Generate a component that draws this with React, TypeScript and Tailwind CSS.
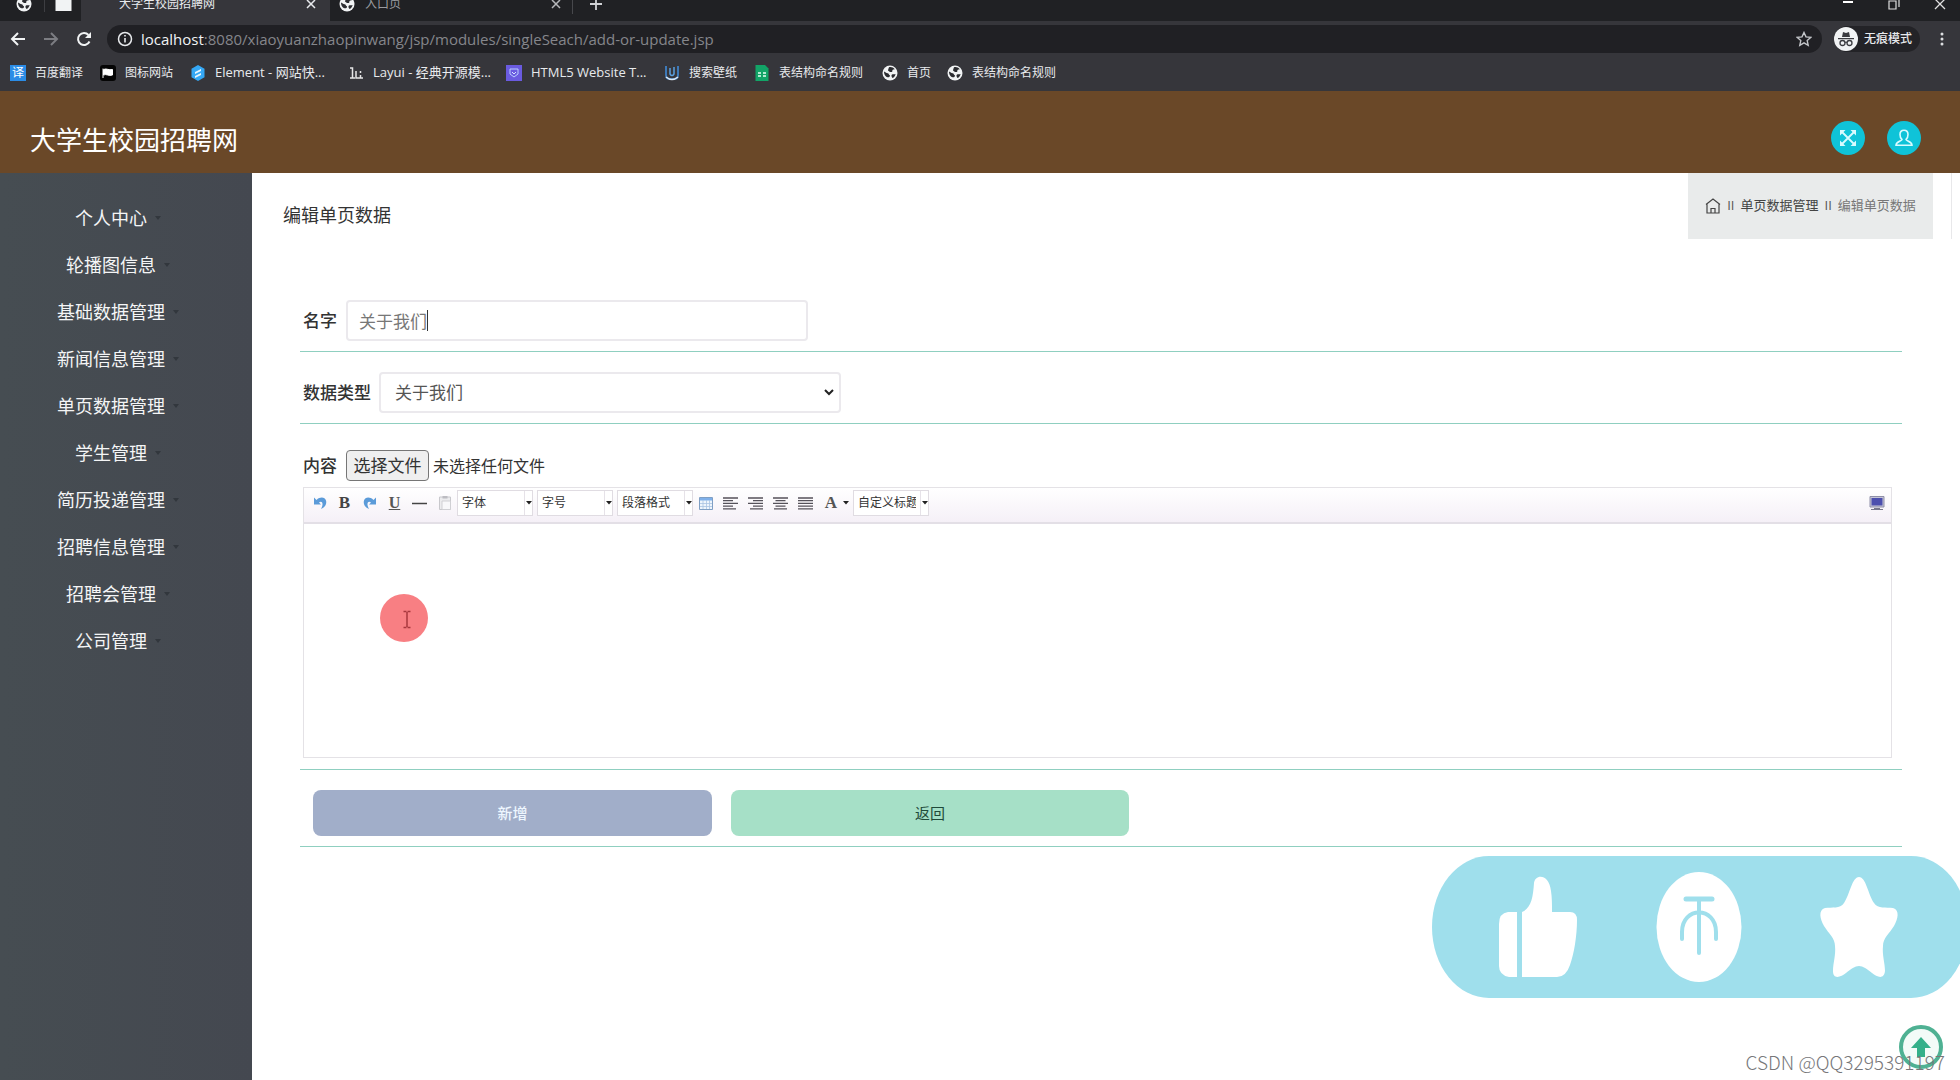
import React from "react";

type IconProps = { className?: string };

const Globe = ({ className = "size-4" }: IconProps) => (
  <svg viewBox="0 0 16 16" className={className} aria-hidden="true">
    <circle cx="8" cy="8" r="7.5" fill="#f1f3f4" />
    <path
      d="M2 6.5c1.5.3 2 1.6 3.600 1.700 1.400.1 1 1.500 2 1.900.8.4.2 1.800-.6 2.200-2.500.4-5-2-5-5.800zM7 2.200c1.800-.6 4.500.1 5.700 2.100-.8.300-1.500 0-2.100.6-.8.9.300 1.700-.9 2.100-1.500.400-2.300-.700-3.400-1.300-.8-.500.300-1.300.2-2.100zM10 9.500c1-.6 2.500-.2 3.600-.6-.3 1.800-1.600 3.500-3 4.100-.9-.9-1.700-2.600-.6-3.500z"
      fill="#2b2c30"
    />
  </svg>
);

const BookmarkIcon = ({ kind }: { kind: string }) => {
  switch (kind) {
    case "translate":
      return (
        <span className="flex size-4 items-center justify-center bg-[#2b8ce6] text-xs leading-none text-white">译</span>
      );
    case "flag":
      return (
        <svg viewBox="0 0 16 16" className="size-4" aria-hidden="true">
          <rect width="16" height="16" rx="3" fill="#050505" />
          <path d="M3 3.500v9.500M3.500 4.500c3-1.500 5 1 9 0v5.500c-4 1.500-6-1.500-9 0z" fill="#fff" stroke="#fff" />
        </svg>
      );
    case "element":
      return (
        <svg viewBox="0 0 16 16" className="size-4" aria-hidden="true">
          <path d="M8 0l6.500 3.800v8.400L8 16l-6.500-3.800V3.800z" fill="#35a8f5" />
          <path d="M5 7l6-3v2L5 9zM5 11l6-3v2l-6 3z" fill="#e8f6ff" />
        </svg>
      );
    case "layui":
      return (
        <svg viewBox="0 0 16 16" className="size-4" aria-hidden="true">
          <path d="M2 3h2.500v9.500M2 13h5M8 6v7h2M12.500 6v2M12.500 10v3M10 13h5" fill="none" stroke="#e6e6e6" strokeWidth="1.500" />
        </svg>
      );
    case "html5":
      return (
        <svg viewBox="0 0 16 16" className="size-4" aria-hidden="true">
          <rect width="16" height="16" fill="#6a5be0" />
          <path d="M4 4h8v5l-4 3-4-3z" fill="none" stroke="#b9d0ff" />
          <path d="M6 7l2 2 2-2" fill="none" stroke="#d8e4ff" />
        </svg>
      );
    case "wallpaper":
      return (
        <svg viewBox="0 0 16 16" className="size-4" aria-hidden="true">
          <path d="M2 1v9q0 4 4 4h4q4 0 4-4V1" fill="none" stroke="#3d79b8" strokeWidth="2" />
          <path d="M6 3v6q2 3 4 0V2" fill="none" stroke="#5aa0e0" strokeWidth="1.500" />
          <path d="M2 12q6 5 12 0" fill="none" stroke="#dfeaf5" strokeWidth="1.500" />
        </svg>
      );
    case "sheet":
      return (
        <svg viewBox="0 0 16 16" className="size-4" aria-hidden="true">
          <path d="M1.500 0H11l3.500 3.500V16h-13z" fill="#12a467" />
          <path d="M4 8h3M9 8h3M4 11h3M9 11h3" stroke="#e8fff5" strokeWidth="1.500" />
        </svg>
      );
    default:
      return <Globe />;
  }
};

const bookmarks = [
  { kind: "translate", label: "百度翻译", style: "w-[90px] text-xs" },
  { kind: "flag", label: "图标网站", style: "w-[90px] text-xs" },
  { kind: "element", label: "Element - 网站快...", style: "w-[158px] text-[13px]" },
  { kind: "layui", label: "Layui - 经典开源模...", style: "w-[158px] text-[13px]" },
  { kind: "html5", label: "HTML5 Website T...", style: "w-[158px] text-[13px]" },
  { kind: "wallpaper", label: "搜索壁纸", style: "w-[90px] text-xs" },
  { kind: "sheet", label: "表结构命名规则", style: "w-[128px] text-xs" },
  { kind: "globe", label: "首页", style: "w-[65px] text-xs" },
  { kind: "globe", label: "表结构命名规则", style: "w-[120px] text-xs" },
];

const Browser = () => (
  <div className="bg-[#36363b] text-[#e8eaed]">
    <div className="flex h-[21px] items-end overflow-hidden bg-[#202124] text-xs">
      <div className="flex h-[34px] w-[81px] shrink-0 items-center pl-4">
        <Globe />
        <span className="ml-3 h-4 w-px bg-[#3d3e42]" />
        <svg viewBox="0 0 16 14" className="ml-2.5 h-3.5 w-[17px]" aria-hidden="true">
          <path d="M0 1h7l1 2h8v11H0z" fill="#f1f3f4" />
        </svg>
      </div>
      <div className="flex h-[34px] w-[249px] shrink-0 items-center bg-[#36363b] pr-[11px] pl-[38px]">
        <span className="flex-1 whitespace-nowrap">大学生校园招聘网</span>
        <button aria-label="关闭标签页" className="size-4">
          <svg viewBox="0 0 16 16" className="size-4">
            <path d="M4 4l8 8M12 4l-8 8" stroke="#e8eaed" strokeWidth="1.500" />
          </svg>
        </button>
      </div>
      <div className="flex h-[34px] w-[242px] shrink-0 items-center pr-2 pl-[9px] text-[#9a9ca0]">
        <Globe />
        <span className="ml-2.5 flex-1">入口页</span>
        <button aria-label="关闭标签页" className="size-4">
          <svg viewBox="0 0 16 16" className="size-4">
            <path d="M4 4l8 8M12 4l-8 8" stroke="#b5b7ba" strokeWidth="1.500" />
          </svg>
        </button>
      </div>
      <div className="flex h-[34px] flex-1 items-center">
        <span className="h-5 w-px bg-[#47484c]" />
        <button aria-label="新标签页" className="ml-4">
          <svg viewBox="0 0 14 14" className="size-3.5">
            <path d="M7 1v12M1 7h12" stroke="#d0d2d5" strokeWidth="1.800" />
          </svg>
        </button>
      </div>
      <div className="flex h-[34px] items-center gap-[34px] pr-3.5">
        <button aria-label="最小化">
          <svg viewBox="0 0 12 12" className="size-3">
            <path d="M1 4h10" stroke="#fff" strokeWidth="2" />
          </svg>
        </button>
        <button aria-label="还原">
          <svg viewBox="0 0 12 12" className="size-3">
            <path d="M1 3h7v8H1zM3 1h8v8" fill="none" stroke="#e0e0e0" strokeWidth="1.200" />
          </svg>
        </button>
        <button aria-label="关闭">
          <svg viewBox="0 0 12 12" className="size-3">
            <path d="M1 1l10 10M11 1L1 11" stroke="#e0e0e0" strokeWidth="1.300" />
          </svg>
        </button>
      </div>
    </div>

    <div className="flex h-9 items-center pr-2.5">
      <div className="flex w-[107px] shrink-0 items-center gap-[17px] pl-2.5">
        <button aria-label="后退">
          <svg viewBox="0 0 16 16" className="size-4">
            <path d="M15 8H2M8 2L2 8l6 6" fill="none" stroke="#f1f3f4" strokeWidth="2" />
          </svg>
        </button>
        <button aria-label="前进">
          <svg viewBox="0 0 16 16" className="size-4">
            <path d="M1 8h13M8 2l6 6-6 6" fill="none" stroke="#7c7d82" strokeWidth="2" />
          </svg>
        </button>
        <button aria-label="重新加载">
          <svg viewBox="0 0 16 16" className="size-4">
            <path d="M13.500 10.500A6 6 0 1 1 12.500 4" fill="none" stroke="#f1f3f4" strokeWidth="2" />
            <path d="M15 1v6H9z" fill="#f1f3f4" />
          </svg>
        </button>
      </div>
      <div className="flex h-7 flex-1 items-center rounded-full bg-[#202024] pr-2.5 pl-2.5">
        <svg viewBox="0 0 16 16" className="size-4" aria-hidden="true">
          <circle cx="8" cy="8" r="6.500" fill="none" stroke="#e8eaed" strokeWidth="1.500" />
          <path d="M8 7v4.500M8 4v1.600" stroke="#e8eaed" strokeWidth="1.600" />
        </svg>
        <p className="ml-2 flex-1 text-[15px] leading-5 text-[#85868b]">
          <span className="text-[#f1f3f4]">localhost</span>
          :8080/xiaoyuanzhaopinwang/jsp/modules/singleSeach/add-or-update.jsp
        </p>
        <button aria-label="添加书签">
          <svg viewBox="0 0 16 16" className="size-4">
            <path d="M8 1.500l2 4.400 4.700.5-3.500 3.200 1 4.700L8 11.900l-4.200 2.400 1-4.700L1.300 6.400 6 5.900z" fill="none" stroke="#c4c6ca" strokeWidth="1.400" />
          </svg>
        </button>
      </div>
      <div className="ml-3 flex h-[26px] items-center rounded-full bg-[#232327] pr-2">
        <svg viewBox="0 0 24 24" className="size-6" aria-hidden="true">
          <circle cx="12" cy="12" r="12" fill="#f1f3f4" />
          <path d="M8 10l1-5 3 1 3-1 1 5zM4 11h16v1.300H4z" fill="#3a3b40" />
          <circle cx="8.500" cy="16" r="2.500" fill="none" stroke="#3a3b40" strokeWidth="1.300" />
          <circle cx="15.500" cy="16" r="2.500" fill="none" stroke="#3a3b40" strokeWidth="1.300" />
          <path d="M11 15.500q1-.8 2 0" fill="none" stroke="#3a3b40" />
        </svg>
        <span className="ml-1.5 text-xs font-medium">无痕模式</span>
      </div>
      <button aria-label="菜单" className="ml-3.5">
        <svg viewBox="0 0 16 16" className="size-4">
          <circle cx="8" cy="3" r="1.500" fill="#dcdee1" />
          <circle cx="8" cy="8" r="1.500" fill="#dcdee1" />
          <circle cx="8" cy="13" r="1.500" fill="#dcdee1" />
        </svg>
      </button>
    </div>

    <nav className="flex h-[34px] items-center pb-0.5 pl-2.5">
      {bookmarks.map((b, i) => (
        <a key={i} href="#" className={`flex shrink-0 items-center gap-[9px] whitespace-nowrap ${b.style}`}>
          <BookmarkIcon kind={b.kind} />
          {b.label}
        </a>
      ))}
    </nav>
  </div>
);

const menu = [
  "个人中心",
  "轮播图信息",
  "基础数据管理",
  "新闻信息管理",
  "单页数据管理",
  "学生管理",
  "简历投递管理",
  "招聘信息管理",
  "招聘会管理",
  "公司管理",
];

const Caret = () => (
  <svg viewBox="0 0 6 4" className="h-1 w-1.5 shrink-0" aria-hidden="true">
    <path d="M0 0h6L3 3.500z" fill="#222" />
  </svg>
);

const Combo = ({ label }: { label: string }) => (
  <span className="relative mr-1 flex h-[26px] w-[76px] border border-[#e0dce2] bg-white last-of-type:mr-0">
    <select aria-label={label} className="w-full appearance-none bg-transparent pr-3 pl-1 text-xs text-[#333] outline-none">
      <option>{label}</option>
    </select>
    <span className="pointer-events-none absolute inset-y-0 right-0 flex w-2 items-center justify-center border-l border-[#e6e2e8]">
      <Caret />
    </span>
  </span>
);

const Tool = ({ label, children }: { label: string; children: React.ReactNode }) => (
  <button aria-label={label} className="flex h-5 w-[25px] items-center justify-center">
    {children}
  </button>
);

const Lines = ({ d }: { d: string }) => (
  <svg viewBox="0 0 15 13" className="h-[13px] w-[15px]">
    <path d={d} stroke="#55525a" strokeWidth="1.300" />
  </svg>
);

const UndoArrow = ({ flip = false }: { flip?: boolean }) => (
  <svg viewBox="0 0 14 14" className={flip ? "size-3.5 -scale-x-100" : "size-3.5"}>
    <path d="M1 1.500v7h7L6 6.500C8 5 9.800 6 9.500 9c-.2 1.500-.8 2.700-1.500 4 4-1.500 6-5 5-8.500C12 1 7 .5 3.500 4z" fill="#5b9bd9" />
  </svg>
);

const Editor = () => (
  <div className="mt-1.5 mr-[10px] mb-[11px] ml-[3px] flex h-[271px] flex-col border border-[#e4e2e6] bg-white">
    <div className="flex h-9 shrink-0 items-center border-b-2 border-[#e3dfe6] bg-gradient-to-b from-white to-[#f5f0f7] pr-1.5 pb-1 pl-[3px]">
      <Tool label="撤销"><UndoArrow /></Tool>
      <Tool label="加粗"><span className="font-['Liberation_Serif'] text-[17px] leading-5 font-bold text-[#444]">B</span></Tool>
      <Tool label="重做"><UndoArrow flip /></Tool>
      <Tool label="下划线"><span className="font-['Liberation_Serif'] text-base leading-5 font-bold text-[#555] underline">U</span></Tool>
      <Tool label="分隔线">
        <svg viewBox="0 0 15 3" className="h-[3px] w-[15px]"><path d="M0 1.500h15" stroke="#444" strokeWidth="1.500" /></svg>
      </Tool>
      <Tool label="粘贴">
        <svg viewBox="0 0 14 16" className="h-4 w-3.5">
          <path d="M1.500 2h11v12.500h-11z" fill="#ececee" stroke="#c8c8cc" />
          <path d="M4.500 1h5v2.500h-5z" fill="#bdbdc2" />
          <path d="M4 6h8.500v8.500H4z" fill="#f8f8fa" stroke="#d0d0d4" />
        </svg>
      </Tool>
      <Combo label="字体" />
      <Combo label="字号" />
      <Combo label="段落格式" />
      <div className="-ml-1 flex items-center">
        <Tool label="表格">
          <svg viewBox="0 0 14 13" className="h-[13px] w-3.5">
            <path d="M.5.5h13v12H.5z" fill="#eef5fc" stroke="#7f9fc4" />
            <path d="M1 1h12v2.500H1z" fill="#7fb0ea" />
            <path d="M1 6.500h12M1 9.500h12M4 3v9M7.500 3v9M10.500 3v9" stroke="#a9c4e2" strokeWidth=".8" />
          </svg>
        </Tool>
        <Tool label="左对齐"><Lines d="M0 1h15M0 3.700h10M0 6.400h15M0 9.100h10M0 11.800h13" /></Tool>
        <Tool label="右对齐"><Lines d="M0 1h15M5 3.700h10M0 6.400h15M5 9.100h10M2 11.800h13" /></Tool>
        <Tool label="居中"><Lines d="M0 1h15M2.500 3.700h10M0 6.400h15M2.500 9.100h10M1 11.800h13" /></Tool>
        <Tool label="两端对齐"><Lines d="M0 1h15M0 3.700h15M0 6.400h15M0 9.100h15M0 11.800h15" /></Tool>
        <button aria-label="字体颜色" className="flex h-5 w-[35px] items-center justify-end gap-1.5 pr-1">
          <span className="font-['Liberation_Serif'] text-[17px] leading-5 font-bold text-[#555]">A</span>
          <Caret />
        </button>
      </div>
      <Combo label="自定义标题" />
      <button aria-label="全屏" className="ml-auto">
        <svg viewBox="0 0 16 14" className="h-3.5 w-4">
          <path d="M1 .5h14v10.500H1z" fill="#c5c5d6" stroke="#8f8fa8" />
          <path d="M2.500 2h11v7.500h-11z" fill="#4c4fae" />
          <path d="M5 12.500h6M2 13.500h12" stroke="#77778c" />
        </svg>
      </button>
    </div>
    <textarea aria-label="内容编辑" className="min-h-0 w-full flex-1 resize-none p-2 outline-none" />
  </div>
);

export default function App() {
  return (
    <div className="relative flex min-h-screen flex-col overflow-hidden bg-white font-['Open_Sans','Noto_Sans_CJK_SC',sans-serif] text-[#333]">
      <Browser />

      <header className="flex h-[82px] shrink-0 items-center justify-between bg-[#6a4828] pr-[39px] pl-[30px]">
        <h1 className="pt-4 text-[26px] leading-8 text-white">大学生校园招聘网</h1>
        <div className="flex gap-[22px] pt-3">
          <button aria-label="全屏" className="flex size-[34px] items-center justify-center rounded-full bg-[#0fc3d8]">
            <svg viewBox="0 0 16 16" className="size-4">
              <path d="M2 2l12 12M14 2L2 14" stroke="#d9fbff" strokeWidth="1.800" />
              <path d="M0 0h5.500L0 5.500zM16 0v5.500L10.500 0zM0 16v-5.500L5.500 16zM16 16h-5.500l5.500-5.500z" fill="#d9fbff" />
            </svg>
          </button>
          <button aria-label="用户" className="flex size-[34px] items-center justify-center rounded-full bg-[#0fc3d8]">
            <svg viewBox="0 0 18 18" className="size-[18px]" fill="none" stroke="#d9fbff" strokeWidth="1.600">
              <path d="M7 10.500C5.500 9.500 5 7.500 5 5.500 5 3 6.500 1.200 9 1.200s4 1.800 4 4.300c0 2-.5 4-2 5 0 1.500 6 2 6 5.800H1c0-3.800 6-4.300 6-5.800z" />
            </svg>
          </button>
        </div>
      </header>

      <div className="flex flex-1">
        <aside className="w-[252px] shrink-0 bg-gradient-to-r from-[#464d52] to-[#444850] pt-[21px]">
          <ul>
            {menu.map((m) => (
              <li key={m}>
                <a href="#" className="flex h-[47px] items-center justify-center gap-2 pr-4 text-lg text-[#f4f5f6]">
                  {m}
                  <svg viewBox="0 0 6 4" className="h-1 w-1.5" aria-hidden="true">
                    <path d="M0 0h6L3 4z" fill="#32373d" />
                  </svg>
                </a>
              </li>
            ))}
          </ul>
        </aside>

        <main className="min-w-0 flex-1">
          <div className="flex h-[66px] items-start pl-[31px]">
            <h2 className="pt-7 text-lg leading-7">编辑单页数据</h2>
            <nav className="ml-auto flex h-[66px] w-[245px] items-center justify-center gap-1.5 bg-[#e9ebeb] text-[13px] text-[#555]">
              <a href="#" aria-label="首页">
                <svg viewBox="0 0 16 16" className="size-4" fill="none" stroke="#444" strokeWidth="1.200">
                  <path d="M1 6.500L8 1l7 5.500M2 6v9h12V6M6 15v-4.500h4V15" />
                </svg>
              </a>
              <span>II</span>
              <a href="#" className="text-[#444]">单页数据管理</a>
              <span>II</span>
              <span className="text-[#777]">编辑单页数据</span>
            </nav>
            <span className="mr-2 ml-[18px] h-[66px] w-px bg-[#e8e8ea]" />
          </div>

          <form className="mt-[41px] mr-[58px] ml-12 text-[17px] leading-6" onSubmit={(e) => e.preventDefault()}>
            <div className="flex items-center border-b border-[#8fcfc0] pt-5 pb-[10px] pl-[3px]">
              <label htmlFor="name" className="font-medium">名字</label>
              <input
                id="name"
                defaultValue="关于我们"
                className="ml-[9px] h-[41px] w-[462px] rounded border-2 border-[#ebe9ed] px-[11px] text-[#777] outline-none"
              />
            </div>

            <div className="flex items-center border-b border-[#8fcfc0] pt-5 pb-[10px] pl-[3px]">
              <label htmlFor="type" className="font-medium">数据类型</label>
              <span className="relative ml-2 flex">
                <select
                  id="type"
                  className="h-[41px] w-[462px] appearance-none rounded border-2 border-[#ebe9ed] bg-white px-[14px] text-[#555] outline-none"
                >
                  <option>关于我们</option>
                </select>
                <svg viewBox="0 0 10 7" className="pointer-events-none absolute top-[17px] right-[7px] h-[7px] w-2.5" aria-hidden="true">
                  <path d="M1 1l4 4 4-4" fill="none" stroke="#222" strokeWidth="2" />
                </svg>
              </span>
            </div>

            <div className="border-b border-[#8fcfc0] pt-[26px]">
              <div className="flex items-center pl-[3px]">
                <span className="font-medium">内容</span>
                <input id="file" type="file" className="peer sr-only" />
                <label
                  htmlFor="file"
                  className="ml-[9px] flex h-[31px] w-[83px] items-center justify-center rounded-sm border border-[#767676] bg-[#efefef]"
                >
                  选择文件
                </label>
                <span className="ml-1 text-base">未选择任何文件</span>
              </div>
              <Editor />
            </div>

            <div className="flex gap-[19px] border-b border-[#8fcfc0] pt-5 pb-[10px] pl-[13px] text-[15px]">
              <button type="submit" className="h-[46px] w-[399px] rounded-lg bg-[#a1aec9] font-medium text-[#eef7ff]">新增</button>
              <button type="button" className="h-[46px] w-[398px] rounded-lg bg-[#a6e0c7] text-[#1f4a3a]">返回</button>
            </div>
          </form>
        </main>
      </div>

      {/* text cursor with its click highlight */}
      <svg viewBox="0 0 48 48" className="pointer-events-none absolute top-[594px] left-[380px] size-12" aria-hidden="true">
        <circle cx="24" cy="24" r="24" fill="#f87f83" />
        <path d="M23.500 17.500h3M27.500 17.500h3M27 18v15M23.500 33.500h3M27.500 33.500h3" stroke="#a8383e" strokeWidth="1.500" />
      </svg>

      {/* caret inside the name field */}
      <span className="pointer-events-none absolute top-[310px] left-[427px] h-[21px] w-px bg-[#333]" />

      {/* like / coin / favourite overlay */}
      <svg viewBox="0 0 528 142" className="pointer-events-none absolute right-0 bottom-[82px] h-[142px] w-[528px]" aria-hidden="true">
        <rect width="536" height="142" rx="57" ry="71" fill="#9fdfec" />
        <g fill="#fff">
          <path d="M85 56H76Q67 57 67 68V110Q67 119 77 121H85Z" />
          <path d="M90 56C99 52 101 42 102 27C103 18 117 17 119 35C120 42 120 48 120 56H138Q145 56 145 64C145 80 142 98 138 109Q134 121 125 121H90Z" />
          <ellipse cx="267" cy="71" rx="42.500" ry="55" />
          <path d="M427 21C434 21 436 38 442 47C446 53 454 51 461 52C468 54 466 63 462 70C457 78 451 82 451 90C450 99 453 107 453 115C452 124 445 121 440 117C435 113 431 110 427 110C423 110 419 113 414 117C409 121 401 124 401 115C401 107 404 99 403 90C403 82 397 78 392 70C388 63 386 54 393 52C400 51 408 53 412 47C418 38 420 21 427 21Z" />
        </g>
        <g fill="none" stroke="#9fdfec" strokeLinecap="round">
          <path d="M254 43h26" strokeWidth="5" />
          <path d="M267 43v54" strokeWidth="4" />
          <path d="M250 83V76C250 50 284 50 284 76V83" strokeWidth="4" />
        </g>
      </svg>

      <button aria-label="返回顶部" className="absolute right-[17px] bottom-[11px] size-11">
        <svg viewBox="0 0 44 44" className="size-11">
          <circle cx="22" cy="22" r="20" fill="#f3fbf8" stroke="#4fb193" strokeWidth="4" />
          <path d="M22 12l10 11h-6v9h-8v-9h-6z" fill="#35b08a" />
        </svg>
      </button>
      <span className="pointer-events-none absolute right-[15px] bottom-1.5 font-['Noto_Sans_CJK_SC',sans-serif] text-[19px] leading-6 font-light text-[#77777a]">
        CSDN @QQ3295391197
      </span>
    </div>
  );
}
